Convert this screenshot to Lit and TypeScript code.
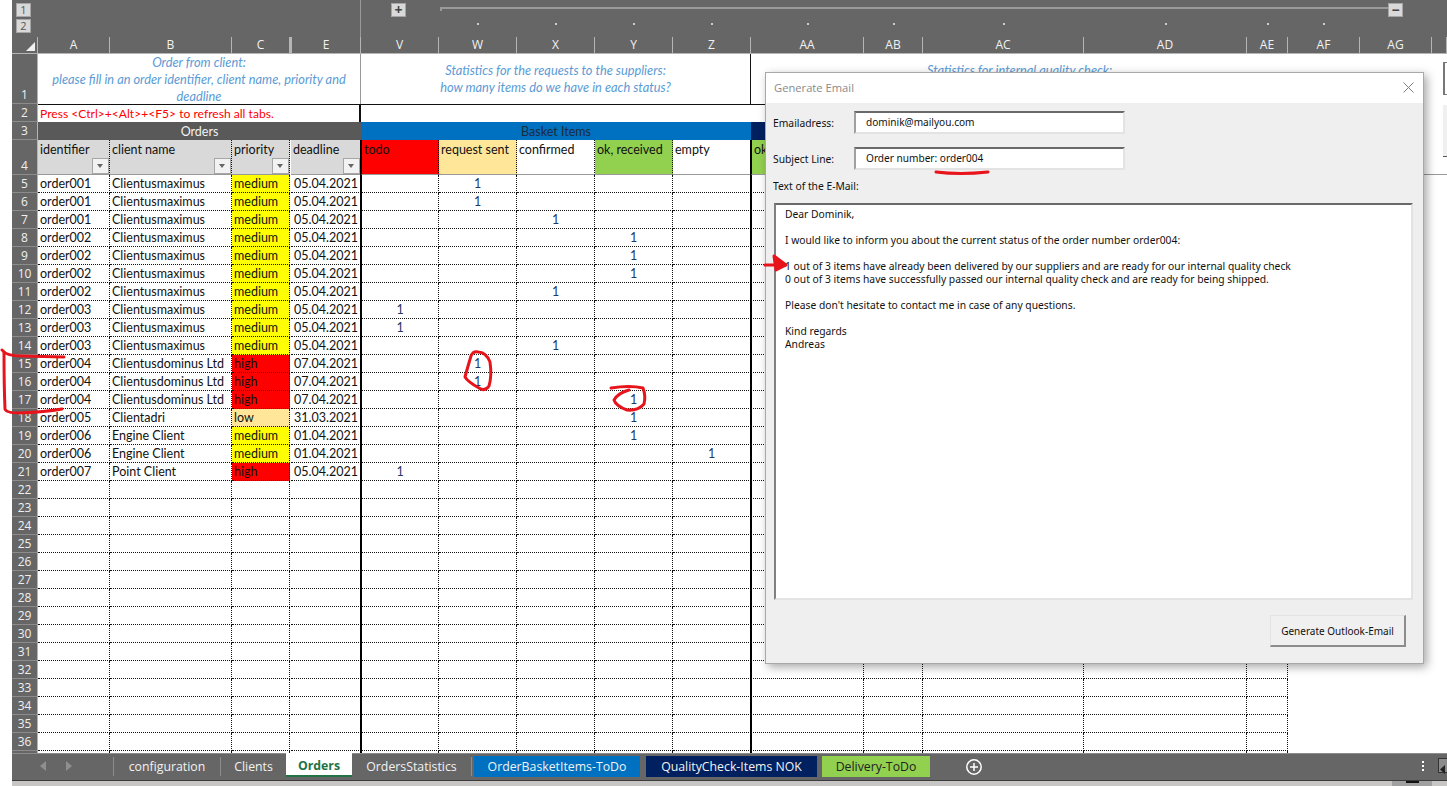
import {css, html, LitElement, svg} from 'lit'
import {customElement} from 'lit/decorators.js'

const COLS = ['A', 'B', 'C', '', 'E', 'V', 'W', 'X', 'Y', 'Z', 'AA', 'AB', 'AC', 'AD', 'AE', 'AF', 'AG', '']
const DOTS = ['W', 'X', 'Y', 'Z', 'AA', 'AB', 'AC', 'AD', 'AE', 'AF']

type Order = [string, string, string, string, string]

const M = 'Clientusmaximus'
const D = 'Clientusdominus Ltd'
const ORDERS: Order[] = [
    ['order001', M, 'medium', '05.04.2021', 'W'],
    ['order001', M, 'medium', '05.04.2021', 'W'],
    ['order001', M, 'medium', '05.04.2021', 'X'],
    ['order002', M, 'medium', '05.04.2021', 'Y'],
    ['order002', M, 'medium', '05.04.2021', 'Y'],
    ['order002', M, 'medium', '05.04.2021', 'Y'],
    ['order002', M, 'medium', '05.04.2021', 'X'],
    ['order003', M, 'medium', '05.04.2021', 'V'],
    ['order003', M, 'medium', '05.04.2021', 'V'],
    ['order003', M, 'medium', '05.04.2021', 'X'],
    ['order004', D, 'high', '07.04.2021', 'W'],
    ['order004', D, 'high', '07.04.2021', 'W'],
    ['order004', D, 'high', '07.04.2021', 'Y'],
    ['order005', 'Clientadri', 'low', '31.03.2021', 'Y'],
    ['order006', 'Engine Client', 'medium', '01.04.2021', 'Y'],
    ['order006', 'Engine Client', 'medium', '01.04.2021', 'Z'],
    ['order007', 'Point Client', 'high', '05.04.2021', 'V'],
]

const STATS = ['V', 'W', 'X', 'Y', 'Z']
const EXTRA = ['AA', 'AB', 'AC', 'AD', 'AE']
const TABS = [
    ['configuration', 'plain', 107], ['Clients', 'plain', 66], ['Orders', 'active', 66], ['OrdersStatistics', 'last', 120],
    ['OrderBasketItems-ToDo', 'blue', 166], ['QualityCheck-Items NOK', 'navy', 171], ['Delivery-ToDo', 'green', 108],
]

@customElement('app-root')
export class AppRoot extends LitElement {

    renderDataRow(num: number, order?: Order) {
        // row 37 is only a 2px sliver above the tab bar, so it carries no number
        return html`
            <div class="rh">${num < 37 ? num : ''}</div>
            <div class="c">${order?.[0]}</div>
            <div class="c">${order?.[1]}</div>
            <div class="c ${order ? 'p-' + order[2] : ''}">${order?.[2]}</div>
            <div class="c date">${order?.[3]}</div>
            ${[...STATS, ...EXTRA].map(col => html`
                <div class="c num ${col === 'V' || col === 'AA' ? 'heavy-l' : ''} ${col === 'Z' ? 'heavy-r' : ''}">${order?.[4] === col ? '1' : ''}</div>`)}
            <div class="rest"></div>
        `
    }

    render() {
        const rows = []
        for (let n = 5; n <= 37; n++) {
            rows.push(this.renderDataRow(n, ORDERS[n - 5]))
        }
        return html`
            <div class="app">
                <div class="margin"></div>
                <div class="excel">
                    <div class="outline cols">
                        <div class="levels"><span class="lvl">1</span><span class="lvl">2</span></div>
                        <div class="plus-cell"><span class="lvl sign">+</span></div>
                        <div class="group-cell">
                            <div class="group-line"></div>
                            <span class="lvl sign">−</span>
                        </div>
                        ${DOTS.map((_, i) => html`<div class="dot-cell" style="grid-column: ${8 + i}"><i></i></div>`)}
                    </div>
                    <div class="sheet cols">
                        <div class="colhead corner"><span class="tri"></span></div>
                        ${COLS.map(name => html`<div class="colhead ${name === 'E' ? 'col-e' : ''}">${name}</div>`)}
                        ${this.renderTop()}
                        ${rows}
                    </div>
                    <div class="tabs">
                        <div class="nav">
                            <svg width="7" height="10" viewBox="0 0 7 10"><path d="M6 0v10L0 5z" fill="#8f8f8f"/></svg>
                            <svg width="7" height="10" viewBox="0 0 7 10"><path d="M1 0v10l6-5z" fill="#8f8f8f"/></svg>
                        </div>
                        ${TABS.map(([name, kind, width]) => html`<div class="tab ${kind}" style="width: ${width}px">${name}</div>`)}
                        <svg class="add" width="18" height="18" viewBox="0 0 18 18">
                            <circle cx="9" cy="9" r="7.2" fill="none" stroke="#fff" stroke-width="1.5"/>
                            <path d="M9 5v8M5 9h8" stroke="#fff" stroke-width="1.5"/>
                        </svg>
                        <div class="tab-end">
                            <span class="dots"><i></i><i></i><i></i></span>
                            <span class="scroll-btn"><svg width="6" height="9" viewBox="0 0 6 9"><path d="M5 0v9L0 4.500z" fill="#222"/></svg></span>
                        </div>
                    </div>
                    <div class="status">
                        <div class="zoom-track"><span></span></div>
                    </div>
                </div>
                <div class="form-btn one"></div>
                <div class="form-btn two"></div>
                ${this.renderDialog()}
                ${this.renderMarks()}
            </div>
        `
    }

    renderTop() {
        return html`
            <div class="rh r1">1</div>
            <div class="note first">
                Order from client:<br>please fill in an order identifier, client name, priority and<br>deadline
            </div>
            <div class="note mid">
                Statistics for the requests to the suppliers:<br>how many items do we have in each status?
            </div>
            <div class="note last">
                Statistics for internal quality check:
            </div>
            <div class="rest"></div>

            <div class="rh">2</div>
            <div class="press">Press &lt;Ctrl&gt;+&lt;Alt&gt;+&lt;F5&gt; to refresh all tabs.</div>
            <div class="press-rest"></div>
            <div class="rest"></div>

            <div class="rh">3</div>
            <div class="band grey">Orders</div>
            <div class="band blue">Basket Items</div>
            <div class="band navy"></div>
            <div class="rest"></div>

            <div class="rh r4">4</div>
            <div class="hd grey-hd">identifier<span class="fl"></span></div>
            <div class="hd grey-hd">client name<span class="fl"></span></div>
            <div class="hd grey-hd">priority<span class="fl"></span></div>
            <div class="hd grey-hd date-hd">deadline<span class="fl"></span></div>
            <div class="hd todo heavy-l">todo</div>
            <div class="hd sent">request sent</div>
            <div class="hd">confirmed</div>
            <div class="hd ok">ok, received</div>
            <div class="hd heavy-r">empty</div>
            <div class="hd ok heavy-l">ok</div>
            <div class="hd hd-fill"></div>
            <div class="hd-rest"></div>
        `
    }

    renderDialog() {
        return html`
            <div class="dialog">
                <div class="dlg-title">
                    <span>Generate Email</span>
                    <svg width="11" height="11" viewBox="0 0 11 11"><path d="M.5.5l10 10M10.5.5l-10 10" stroke="#808080" fill="none"/></svg>
                </div>
                <div class="dlg-body">
                    <div class="field"><label>Emailadress:</label><div class="input">dominik@mailyou.com</div></div>
                    <div class="field"><label>Subject Line:</label><div class="input">Order number: order004</div></div>
                    <div class="text-label">Text of the E-Mail:</div>
                    <div class="textarea">Dear Dominik,

I would like to inform you about the current status of the order number order004:

1 out of 3 items have already been delivered by our suppliers and are ready for our internal quality check
0 out of 3 items have successfully passed our internal quality check and are ready for being shipped.

Please don't hesitate to contact me in case of any questions.

Kind regards
Andreas</div>
                    <div class="dlg-foot"><button>Generate Outlook-Email</button></div>
                </div>
            </div>
        `
    }

    renderMarks() {
        return html`
            <svg class="marks" width="1447" height="786" viewBox="0 0 1447 786" fill="none" stroke="#e8141c" stroke-width="3" stroke-linecap="round" stroke-linejoin="round">
                ${svg`
                    <path d="M2 350 Q6 356 22 356 L64 357"/>
                    <path d="M4 352 Q4 385 5 409 Q6 413 20 413 Q45 412 62 409"/>
                    <path d="M478 352 Q486 352 490 362 Q492 376 489 386 Q485 392 479 388 Q468 382 465 377 Q468 366 471 356 Q473 351 478 352"/>
                    <path d="M611 388 Q630 385 643 388 Q646 396 644 404 Q638 411 627 410 Q616 406 614 400 Q618 393 629 390"/>
                    <path d="M936 172 Q960 175 988 172"/>
                    <path d="M765 265 L785 265"/>
                    <path d="M774 256 L786 265 L776 270 Z" fill="#e8141c"/>
                `}
            </svg>
        `
    }

    static styles = css`
      :host {
        display: block;
        font-family: 'Lato', sans-serif;
      }

      .app {
        position: relative;
        display: flex;
        width: 1447px;
        height: 786px;
        overflow: hidden;
        background: #fff;
      }

      .margin {
        width: 12px;
        flex: none;
      }

      .excel {
        flex: 1;
        min-width: 0;
        display: flex;
        flex-direction: column;
        background: #666;
      }

      .cols {
        display: grid;
        grid-template-columns: 26px 72px 122px 58px 1px 70px 78px 78px 78px 78px 78px 113px 59px 161px 163px 41px 72px 72px 15px;
      }

      .outline {
        height: 37px;
        flex: none;
        grid-template-rows: 20px 17px;
      }

      .levels {
        grid-column: 1 / span 6;
        grid-row: 1 / span 2;
        display: flex;
        flex-direction: column;
        gap: 2px;
        padding: 3px 0 0 4px;
        border-right: 1px solid #999;
      }

      .lvl {
        display: block;
        width: 15px;
        height: 14px;
        box-sizing: border-box;
        border: 1px solid #a6a6a6;
        background: #d9d9d9;
        color: #555;
        font-family: 'Open Sans', sans-serif;
        font-size: 11px;
        line-height: 12px;
        text-align: center;
      }

      .plus-cell {
        grid-column: 7;
        grid-row: 1;
        padding: 3px 0 0 30px;
      }

      .sign {
        font-weight: 700;
        font-size: 14px;
        line-height: 11px;
        color: #444;
        flex: none;
      }

      .group-cell {
        grid-column: 8 / span 11;
        grid-row: 1;
        display: flex;
        padding: 3px 29px 0 1px;
      }

      .group-line {
        flex: 1;
        height: 4px;
        margin-top: 4px;
        box-sizing: border-box;
        border-top: 2px solid #999;
        border-left: 2px solid #999;
      }

      .dot-cell {
        grid-row: 2;
        display: flex;
        justify-content: center;
        padding-top: 3px;
      }

      .dot-cell i {
        width: 2px;
        height: 2px;
        background: #ccc;
      }

      .sheet {
        height: 716px;
        flex: none;
        overflow: hidden;
        grid-auto-rows: 18px;
        grid-template-rows: 17px 50px 18px 18px 35px;
        align-content: start;
        background: #fff;
        font-size: 12.5px;
        color: #111;
      }

      .colhead {
        background: #666;
        color: #f2f2f2;
        font-family: 'Open Sans', sans-serif;
        font-size: 12px;
        line-height: 16px;
        text-align: center;
        border-right: 1px solid #b5b5b5;
        border-bottom: 1px solid #b5b5b5;
        box-sizing: border-box;
        overflow: hidden;
      }

      .corner {
        position: relative;
      }

      .tri {
        position: absolute;
        right: 2px;
        bottom: 2px;
        border-style: solid;
        border-width: 0 0 9px 9px;
        border-color: transparent transparent #f0f0f0 transparent;
      }

      .col-e {
        border-left: 1px solid #b5b5b5;
      }

      .rh {
        background: #666;
        color: #f0f0f0;
        font-family: 'Open Sans', sans-serif;
        font-size: 12px;
        line-height: 17px;
        text-align: center;
        border-bottom: 1px solid #8c8c8c;
        border-right: 1px solid #b5b5b5;
        box-sizing: border-box;
      }

      .r1, .r4 {
        display: flex;
        align-items: flex-end;
        justify-content: center;
      }

      .note {
        color: #5b9bd5;
        font-style: italic;
        font-size: 12.8px;
        line-height: 17px;
        text-align: center;
        box-sizing: border-box;
        white-space: nowrap;
      }

      .note.first {
        grid-column: 2 / span 5;
        border-right: 1px solid #999;
      }

      .note.mid {
        grid-column: 7 / span 5;
        padding-top: 8px;
        border-right: 1px solid #111;
      }

      .note.last {
        grid-column: 12 / span 5;
        padding-top: 8px;
      }

      .rest {
        grid-column: 17 / span 3;
      }

      .press {
        grid-column: 2 / span 5;
        color: #f00;
        font-size: 12.1px;
        padding-left: 2px;
        line-height: 17px;
        border-top: 1px solid #111;
        border-right: 2px solid #111;
        box-sizing: border-box;
      }

      .press-rest {
        grid-column: 7 / span 10;
        border-top: 1px solid #111;
      }

      .band {
        text-align: center;
        line-height: 19px;
      }

      .band.grey {
        grid-column: 2 / span 5;
        background: #595959;
        color: #f2f2f2;
      }

      .band.blue {
        grid-column: 7 / span 5;
        background: #0070c0;
        color: #1c2b3c;
      }

      .band.navy {
        grid-column: 12 / span 5;
        background: #002060;
      }

      .hd {
        position: relative;
        padding: 1px 0 0 2px;
        line-height: 18px;
        box-sizing: border-box;
        border-right: 1px dotted #111;
        border-bottom: 1px solid #999;
        overflow: hidden;
        white-space: nowrap;
      }

      .date-hd {
        grid-column: 6;
      }

      .hd-fill {
        grid-column: 13 / span 4;
        border-right: 0;
      }

      .hd-rest {
        grid-column: 17 / span 3;
        border-bottom: 1px solid #999;
      }

      .grey-hd {
        background: #d9d9d9;
      }

      .todo {
        background: #f00;
      }

      .sent {
        background: #ffe699;
      }

      .ok {
        background: #92d050;
      }

      .fl {
        position: absolute;
        right: 0;
        bottom: 0;
        width: 17px;
        height: 16px;
        box-sizing: border-box;
        background: #f2f2f2;
        border: 1px solid #a6a6a6;
      }

      .fl::after {
        content: "";
        position: absolute;
        left: 4px;
        top: 5px;
        border-style: solid;
        border-width: 4px 3.5px 0 3.5px;
        border-color: #666 transparent transparent transparent;
      }

      .c {
        box-sizing: border-box;
        padding-left: 2px;
        line-height: 18px;
        white-space: nowrap;
        overflow: hidden;
        border-right: 1px dotted #111;
        border-bottom: 1px dotted #111;
      }

      .date {
        grid-column: 6;
        text-align: right;
        padding-right: 3px;
        border-right: 0;
      }

      .num {
        text-align: center;
        padding-left: 0;
        color: #1f3864;
      }

      .heavy-l {
        border-left: 1px solid #000;
        box-shadow: -1px 0 0 #000;
      }

      .heavy-r {
        border-right: 1px solid #000;
      }

      .p-medium {
        background: #ff0;
      }

      .p-high {
        background: #f00;
      }

      .p-low {
        background: #ffe699;
      }

      .tabs {
        height: 28px;
        flex: none;
        display: flex;
        color: #f2f2f2;
        font-family: 'Open Sans', sans-serif;
        font-size: 12.3px;
        box-sizing: border-box;
        border-top: 1px solid #8c8c8c;
        border-bottom: 1px solid #3c3c3c;
        padding-bottom: 3px;
      }

      .nav {
        width: 101px;
        flex: none;
        display: flex;
        gap: 18px;
        padding-left: 28px;
        box-sizing: border-box;
        align-items: center;
      }

      .tab {
        flex: none;
        box-sizing: border-box;
        display: flex;
        align-items: center;
        justify-content: center;
        margin-top: 2px;
      }

      .tab.plain, .tab.last {
        margin: 3px 0 2px;
        height: 19px;
        align-self: center;
        border-left: 1px solid #8c8c8c;
      }

      .tab.active {
        background: #fff;
        color: #217346;
        font-weight: 700;
        margin-top: -1px;
        box-shadow: inset 0 -2px 0 #217346;
      }

      .tab.last {
        border-left: 0;
        border-right: 1px solid #8c8c8c;
      }

      .tab.blue {
        background: #0070c0;
        margin-left: 2px;
      }

      .tab.navy {
        background: #002060;
        margin-left: 6px;
      }

      .tab.green {
        background: #92d050;
        color: #222;
        margin-left: 5px;
      }

      .add {
        margin: 4px 0 0 35px;
      }

      .tab-end {
        margin-left: auto;
        display: flex;
        align-items: center;
        gap: 14px;
        margin-right: -3px;
      }

      .dots {
        display: flex;
        flex-direction: column;
        gap: 2px;
      }

      .dots i {
        width: 2px;
        height: 2px;
        background: #fff;
      }

      .scroll-btn {
        width: 12px;
        height: 15px;
        box-sizing: border-box;
        border: 1px solid #333;
        background: #8c8c8c;
        padding: 2px 0 0 1px;
      }

      .status {
        flex: 1;
        min-height: 0;
        background: #c8c6c4;
        display: flex;
        justify-content: flex-end;
        padding-right: 15px;
      }

      .zoom-track {
        width: 40px;
        background: #a0a0a0;
        display: flex;
        justify-content: center;
      }

      .zoom-track span {
        width: 13px;
        height: 2px;
        background: #111;
      }

      .form-btn {
        position: absolute;
        left: 1443px;
        width: 10px;
        box-sizing: border-box;
        background: #f0f0f0;
      }

      .form-btn.one {
        top: 62px;
        height: 33px;
        background: #fff;
        border-top: 1px solid #777;
        border-left: 2px solid #777;
        border-bottom: 1px solid #777;
      }

      .form-btn.two {
        top: 105px;
        height: 52px;
        border-bottom: 1px solid #555;
      }

      .dialog {
        position: absolute;
        left: 765px;
        top: 72px;
        width: 659px;
        height: 592px;
        display: flex;
        flex-direction: column;
        background: #efefef;
        border: 1px solid #a8a8a8;
        box-sizing: border-box;
        box-shadow: 3px 3px 9px rgba(0, 0, 0, .35);
        font-family: 'Noto Sans', sans-serif;
        font-size: 10.3px;
        color: #111;
      }

      .dlg-title {
        height: 30px;
        flex: none;
        box-sizing: border-box;
        background: #fff;
        color: #8a8a8a;
        font-family: 'Open Sans', sans-serif;
        font-size: 11.2px;
        display: flex;
        align-items: center;
        justify-content: space-between;
        padding: 0 9px 2px 8px;
      }

      .dlg-body {
        flex: 1;
        min-height: 0;
        display: flex;
        flex-direction: column;
        padding: 8px 10px 16px 7px;
      }

      .field {
        display: flex;
        align-items: center;
        flex: none;
        height: 23px;
        margin-bottom: 13px;
      }

      .field label {
        width: 81px;
        flex: none;
      }

      .input {
        width: 271px;
        height: 100%;
        box-sizing: border-box;
        padding-left: 10px;
        font-size: 10.1px;
        line-height: 19px;
        background: #fff;
        border: 2px solid #e3e3e3;
        border-top-color: #696969;
        border-left-color: #a0a0a0;
      }

      .text-label {
        flex: none;
        height: 14px;
        line-height: 14px;
        margin: -4px 0 10px;
      }

      .textarea {
        flex: 1;
        min-height: 0;
        box-sizing: border-box;
        margin-left: 1px;
        background: #fff;
        border: 2px solid #e3e3e3;
        border-top-color: #696969;
        border-left-color: #808080;
        padding: 3px 9px;
        line-height: 13px;
        white-space: pre-wrap;
      }

      .dlg-foot {
        flex: none;
        display: flex;
        justify-content: flex-end;
        padding: 15px 7px 0 0;
      }

      .dlg-foot button {
        width: 136px;
        height: 32px;
        background: #f0f0f0;
        border: 1px solid #8c8c8c;
        border-top-color: #e3e3e3;
        border-left-color: #e3e3e3;
        border-bottom-width: 2px;
        border-right-width: 2px;
        font: inherit;
        font-size: 10px;
        color: #111;
        padding: 0;
      }

      .marks {
        position: absolute;
        left: 0;
        top: 0;
        pointer-events: none;
      }
    `
}

declare global {
    interface HTMLElementTagNameMap {
        'app-root': AppRoot
    }
}
